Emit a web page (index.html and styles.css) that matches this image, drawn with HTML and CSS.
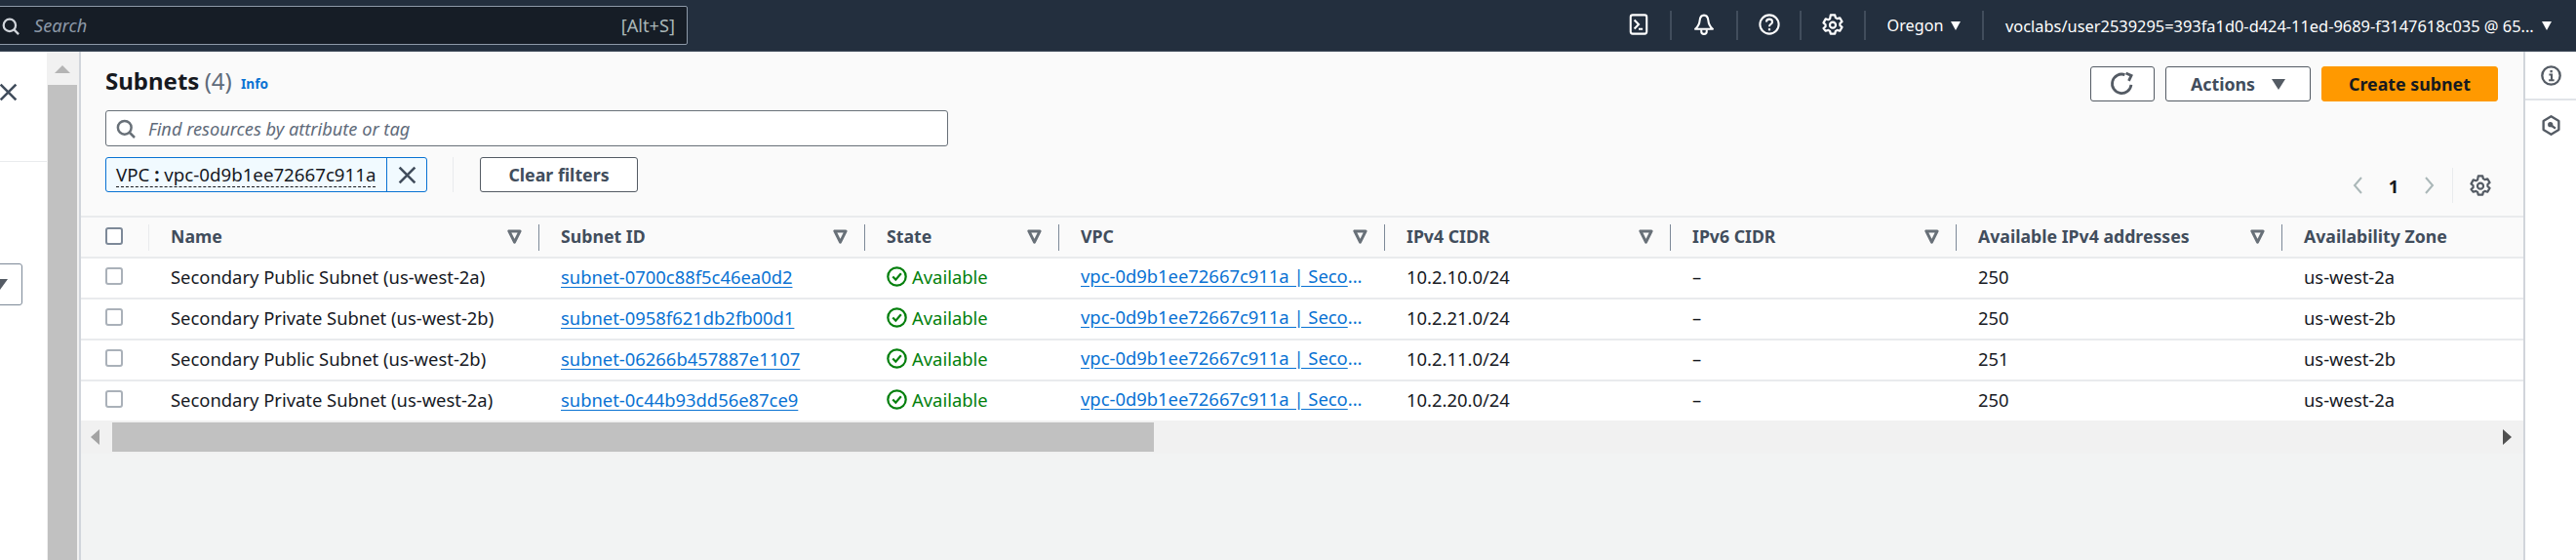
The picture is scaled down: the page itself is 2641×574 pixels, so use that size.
FILE: index.html
```html
<!DOCTYPE html>
<html lang="en">
<head>
<meta charset="utf-8">
<title>Subnets | VPC Console</title>
<link rel="stylesheet" href="styles.css">
</head>
<body>
<svg class="defs" width="0" height="0" aria-hidden="true">
  <defs>
    <symbol id="i-search" viewBox="0 0 16 16"><circle cx="7" cy="7" r="5.5" fill="none" stroke="currentColor" stroke-width="2"/><path d="M11 11l4.2 4.2" fill="none" stroke="currentColor" stroke-width="2"/></symbol>
    <symbol id="i-close" viewBox="0 0 16 16"><path d="M2 2l12 12M14 2L2 14" fill="none" stroke="currentColor" stroke-width="2"/></symbol>
    <symbol id="i-filter" viewBox="0 0 12 12"><path d="M1.5 1.5h9L6 10.5z" fill="none" stroke="currentColor" stroke-width="2.4" stroke-linejoin="round"/></symbol>
    <symbol id="i-check" viewBox="0 0 16 16"><circle cx="8" cy="8" r="7" fill="none" stroke="currentColor" stroke-width="1.7"/><path d="M4.8 8l2.3 2.4 4.2-4.8" fill="none" stroke="currentColor" stroke-width="1.7"/></symbol>
    <symbol id="i-gear" viewBox="0 0 16 16"><path d="M6.4 1h3.2l.5 2 1.2.7 2-.6 1.6 2.8-1.5 1.4v1.4l1.5 1.4-1.6 2.8-2-.6-1.2.7-.5 2H6.4l-.5-2-1.2-.7-2 .6L1.1 11l1.5-1.4V8.2L1.1 6.8l1.6-2.9 2 .6 1.2-.7z" fill="none" stroke="currentColor" stroke-width="1.6" stroke-linejoin="round"/><circle cx="8" cy="8.5" r="2.2" fill="none" stroke="currentColor" stroke-width="1.6"/></symbol>
  </defs>
</svg>

<header class="topnav">
  <div class="global-search">
    <svg class="gs-icon"><use href="#i-search"/></svg>
    <span class="gs-text">Search</span>
    <span class="gs-key">[Alt+S]</span>
  </div>
  <nav class="nav-right">
    <div class="nav-cell">
      <svg class="nav-icon" viewBox="0 0 16 16"><rect x="2" y="1" width="12" height="14" rx="1.5" fill="none" stroke="currentColor" stroke-width="1.5"/><path d="M4.8 4.8L8 8l-3.2 3.2M8 11.5h3" fill="none" stroke="currentColor" stroke-width="1.5"/></svg>
    </div>
    <div class="nav-cell">
      <svg class="nav-icon" viewBox="0 0 16 16"><path d="M8 1.2C5.8 1.2 5 3 4.8 5.2 4.6 8 3.4 9.8 1.5 11.5h13C12.6 9.8 11.4 8 11.2 5.2 11 3 10.2 1.2 8 1.2z" fill="none" stroke="currentColor" stroke-width="1.5" stroke-linejoin="round"/><path d="M6 12v1.2a2 2 0 0 0 4 0V12" fill="none" stroke="currentColor" stroke-width="1.5"/></svg>
    </div>
    <div class="nav-cell">
      <svg class="nav-icon" viewBox="0 0 16 16"><circle cx="8" cy="8" r="7" fill="none" stroke="currentColor" stroke-width="1.5"/><path d="M5.8 6.2C5.8 4.9 6.8 4.1 8 4.1s2.2.8 2.2 2c0 1.7-2.2 1.8-2.2 3.5" fill="none" stroke="currentColor" stroke-width="1.5"/><path d="M7.2 11h1.6v1.6H7.2z" fill="currentColor"/></svg>
    </div>
    <div class="nav-cell">
      <svg class="nav-icon"><use href="#i-gear"/></svg>
    </div>
    <div class="nav-cell nav-region">Oregon <span class="nav-caret"></span></div>
    <div class="nav-cell nav-account"><span>voclabs/user2539295=393fa1d0-d424-11ed-9689-f3147618c035 @ 65...</span><span class="nav-caret"></span></div>
  </nav>
</header>

<div class="shell">
  <aside class="sidepanel">
    <svg class="side-close"><use href="#i-close"/></svg>
    <div class="side-rule"></div>
    <div class="side-select"><span class="side-caret"></span></div>
  </aside>

  <div class="vscroll">
    <span class="vscroll-arrow"></span>
    <div class="vscroll-thumb"></div>
  </div>

  <main class="content">
    <section class="panel-head">
      <h1 class="title">Subnets <span class="count">(4)</span> <a class="info">Info</a></h1>
      <div class="actions">
        <button class="btn btn-icon">
          <svg class="refresh" viewBox="0 0 16 16"><path d="M13.5 8.5A6 6 0 1 1 9.5 2.2" fill="none" stroke="currentColor" stroke-width="1.7"/><path d="M9.6 0.8l3.4 1.5-1.6 3.4" fill="none" stroke="currentColor" stroke-width="1.7" transform="translate(0.6 0.4)"/></svg>
        </button>
        <button class="btn btn-actions">Actions <span class="btn-caret"></span></button>
        <button class="btn btn-primary">Create subnet</button>
      </div>
    </section>

    <section class="filters">
      <div class="filter-left">
        <div class="find">
          <svg class="find-icon"><use href="#i-search"/></svg>
          <span class="find-text">Find resources by attribute or tag</span>
        </div>
        <div class="tokens">
          <div class="token">
            <span class="token-label"><span class="token-text">VPC <b>:</b> vpc-0d9b1ee72667c911a</span></span>
            <span class="token-x"><svg class="token-x-icon"><use href="#i-close"/></svg></span>
          </div>
          <div class="token-sep"></div>
          <button class="btn btn-clear">Clear filters</button>
        </div>
      </div>
      <div class="pager">
        <svg class="chev" viewBox="0 0 12 20"><path d="M10 2L3 10l7 8" fill="none" stroke="currentColor" stroke-width="2"/></svg>
        <span class="page-num">1</span>
        <svg class="chev" viewBox="0 0 12 20"><path d="M2 2l7 8-7 8" fill="none" stroke="currentColor" stroke-width="2"/></svg>
        <span class="pager-sep"><svg class="pager-gear"><use href="#i-gear"/></svg></span>
      </div>
    </section>

    <div class="table-wrap">
      <table class="grid">
        <colgroup>
          <col class="c-check"><col class="c-name"><col class="c-id"><col class="c-state"><col class="c-vpc"><col class="c-v4"><col class="c-v6"><col class="c-avail"><col class="c-az">
        </colgroup>
        <thead>
          <tr>
            <th><span class="th-in th-check"><span class="cb"></span></span></th>
            <th><span class="th-in">Name<svg class="fi"><use href="#i-filter"/></svg></span></th>
            <th><span class="th-in">Subnet ID<svg class="fi"><use href="#i-filter"/></svg></span></th>
            <th><span class="th-in">State<svg class="fi"><use href="#i-filter"/></svg></span></th>
            <th><span class="th-in">VPC<svg class="fi"><use href="#i-filter"/></svg></span></th>
            <th><span class="th-in">IPv4 CIDR<svg class="fi"><use href="#i-filter"/></svg></span></th>
            <th><span class="th-in">IPv6 CIDR<svg class="fi"><use href="#i-filter"/></svg></span></th>
            <th><span class="th-in">Available IPv4 addresses<svg class="fi"><use href="#i-filter"/></svg></span></th>
            <th><span class="th-in th-last">Availability Zone</span></th>
          </tr>
        </thead>
        <tbody>
          <tr>
            <td class="cell-check"><span class="cb"></span></td>
            <td>Secondary Public Subnet (us-west-2a)</td>
            <td><a class="link">subnet-0700c88f5c46ea0d2</a></td>
            <td><span class="status"><svg class="status-icon"><use href="#i-check"/></svg>Available</span></td>
            <td><div class="trunc"><a class="link">vpc-0d9b1ee72667c911a | Seco</a>...</div></td>
            <td>10.2.10.0/24</td><td>–</td><td>250</td><td>us-west-2a</td>
          </tr>
          <tr>
            <td class="cell-check"><span class="cb"></span></td>
            <td>Secondary Private Subnet (us-west-2b)</td>
            <td><a class="link">subnet-0958f621db2fb00d1</a></td>
            <td><span class="status"><svg class="status-icon"><use href="#i-check"/></svg>Available</span></td>
            <td><div class="trunc"><a class="link">vpc-0d9b1ee72667c911a | Seco</a>...</div></td>
            <td>10.2.21.0/24</td><td>–</td><td>250</td><td>us-west-2b</td>
          </tr>
          <tr>
            <td class="cell-check"><span class="cb"></span></td>
            <td>Secondary Public Subnet (us-west-2b)</td>
            <td><a class="link">subnet-06266b457887e1107</a></td>
            <td><span class="status"><svg class="status-icon"><use href="#i-check"/></svg>Available</span></td>
            <td><div class="trunc"><a class="link">vpc-0d9b1ee72667c911a | Seco</a>...</div></td>
            <td>10.2.11.0/24</td><td>–</td><td>251</td><td>us-west-2b</td>
          </tr>
          <tr>
            <td class="cell-check"><span class="cb"></span></td>
            <td>Secondary Private Subnet (us-west-2a)</td>
            <td><a class="link">subnet-0c44b93dd56e87ce9</a></td>
            <td><span class="status"><svg class="status-icon"><use href="#i-check"/></svg>Available</span></td>
            <td><div class="trunc"><a class="link">vpc-0d9b1ee72667c911a | Seco</a>...</div></td>
            <td>10.2.20.0/24</td><td>–</td><td>250</td><td>us-west-2a</td>
          </tr>
        </tbody>
      </table>
    </div>

    <div class="hscroll">
      <span class="hs-left"></span>
      <div class="hs-thumb"></div>
      <span class="hs-right"></span>
    </div>
  </main>

  <aside class="tools">
    <div class="tool tool-first">
      <svg class="tool-icon" viewBox="0 0 16 16"><circle cx="8" cy="8" r="7" fill="none" stroke="currentColor" stroke-width="1.8"/><path d="M6.4 7.2H8.4V11.6M6.2 11.6h4.2" fill="none" stroke="currentColor" stroke-width="1.6"/><path d="M7.2 3.8h1.8v1.8H7.2z" fill="currentColor"/></svg>
    </div>
    <div class="tool">
      <svg class="tool-icon" viewBox="0 0 16 16"><path d="M8 1l6 3.5v7L8 15l-6-3.5v-7z" fill="none" stroke="currentColor" stroke-width="1.8" stroke-linejoin="round"/><circle cx="7.4" cy="7.4" r="2" fill="currentColor"/><path d="M8 8l3.4 2.4" fill="none" stroke="currentColor" stroke-width="1.8"/></svg>
    </div>
  </aside>
</div>
</body>
</html>
```

FILE: styles.css
```css
* { box-sizing: border-box; }
html, body { margin: 0; height: 100%; overflow: hidden; }
body {
  display: flex;
  flex-direction: column;
  font-family: "Noto Sans", "Liberation Sans", sans-serif;
  font-size: 18.4px;
  color: #16191f;
  background: #fff;
}
.defs { position: absolute; }
svg { display: block; }

/* top navigation */
.topnav {
  flex: none;
  height: 53px;
  display: flex;
  align-items: flex-start;
  background: #232f3e;
  border-bottom: 1px solid #414d5c;
}
.global-search {
  width: 707px;
  height: 40px;
  margin: 6px 0 0 -2px;
  padding: 0 12px 0 3px;
  display: flex;
  align-items: center;
  background: #161d26;
  border: 1px solid #8d99a8;
  border-radius: 2px;
  color: #aab7b8;
}
.gs-icon { width: 18px; height: 18px; color: #d1d5db; margin-top: 1px; }
.gs-text { margin-left: 15px; font-style: italic; font-size: 18.2px; color: #8d99a8; }
.gs-key { margin-left: auto; font-size: 18.2px; color: #aab7b8; }
.nav-right {
  margin-left: auto;
  display: grid;
  grid-template-columns: 67px 68px 65px 66px 121px 607px;
  height: 30px;
  margin-top: 11px;
  color: #fff;
}
.nav-cell {
  display: flex;
  align-items: center;
  justify-content: center;
  border-right: 2px solid #414d5c;
}
.nav-cell:last-child { border-right: 0; }
.nav-icon { width: 22px; height: 22px; margin-top: -2px; }
.nav-region { font-size: 16.2px; gap: 8px; color: #fff; }
.nav-account { justify-content: flex-start; padding-left: 22px; font-size: 16.4px; gap: 8px; white-space: nowrap; }
.nav-caret {
  display: inline-block;
  width: 0; height: 0;
  border-left: 5px solid transparent;
  border-right: 5px solid transparent;
  border-top: 9px solid #fff;
}

/* shell */
.shell { flex: 1; display: flex; min-height: 0; }
.sidepanel {
  flex: none;
  width: 48px;
  overflow: hidden;
  display: flex;
  flex-direction: column;
  background: #fff;
}
.side-close { flex: none; width: 21px; height: 21px; margin: 31px 0 0 -2px; color: #414d5c; }
.side-rule { height: 1px; margin-top: 60px; background: #e9ebed; }
.side-select {
  flex: none;
  width: 54px;
  height: 43px;
  margin: 104px 0 0 -31px;
  border: 1px solid #7d8998;
  border-radius: 3px;
  background: #fff;
  display: flex;
  align-items: center;
  justify-content: center;
}
.side-caret {
  width: 0; height: 0;
  margin-left: 8px;
  border-left: 8px solid transparent;
  border-right: 8px solid transparent;
  border-top: 11px solid #545b64;
}
.vscroll {
  flex: none;
  width: 35px;
  display: flex;
  flex-direction: column;
  background: #f1f1f1;
  border-right: 2px solid #d1d5db;
  padding-left: 1px;
}
.vscroll-arrow {
  width: 0; height: 0;
  margin: 14px 0 0 7px;
  border-left: 8px solid transparent;
  border-right: 8px solid transparent;
  border-bottom: 8px solid #b4b4b4;
}
.vscroll-thumb { flex: 1; width: 30px; margin-top: 12px; background: #c1c1c1; }

/* main column */
.content {
  flex: none;
  width: 2504px;
  display: flex;
  flex-direction: column;
  min-width: 0;
  background: #f2f3f3;
  overflow: hidden;
}
.panel-head {
  height: 60px;
  padding: 15px 26px 0 25px;
  display: flex;
  justify-content: space-between;
  align-items: flex-start;
  background: #fafafa;
}
.title { margin: -1px 0 0; font-size: 24px; line-height: 32px; font-weight: 700; color: #16191f; }
.count { font-weight: 400; color: #5f6b7a; margin-left: -1px; }
.info { margin-left: 3px; font-size: 13.6px; font-weight: 700; color: #0972d3; vertical-align: 1px; }
.actions { display: flex; gap: 11px; }
.btn {
  height: 36px;
  padding: 0;
  display: flex;
  align-items: center;
  justify-content: center;
  font-family: inherit;
  font-size: 17.8px;
  font-weight: 700;
  color: #414d5c;
  background: #fff;
  border: 1px solid #545b64;
  border-radius: 3px;
}
.btn-icon { width: 66px; }
.refresh { width: 26px; height: 26px; color: #545b64; }
.btn-actions { width: 149px; gap: 17px; }
.btn-caret {
  width: 0; height: 0;
  border-left: 7px solid transparent;
  border-right: 7px solid transparent;
  border-top: 11px solid #545b64;
}
.btn-primary { width: 181px; background: #ff9900; border-color: #ff9900; color: #16191f; }
.btn-clear { width: 162px; }

.filters {
  height: 108px;
  padding: 0 33px 0 25px;
  display: flex;
  justify-content: space-between;
  align-items: flex-start;
  background: #fafafa;
}
.filter-left { width: 864px; display: flex; flex-direction: column; gap: 11px; }
.find {
  height: 37px;
  display: flex;
  align-items: center;
  padding-left: 10px;
  background: #fff;
  border: 1px solid #687078;
  border-radius: 3px;
}
.find-icon { width: 20px; height: 20px; color: #687078; }
.find-text { margin-left: 13px; font-style: italic; font-size: 18.2px; color: #5f6b7a; }
.tokens { display: flex; align-items: stretch; height: 36px; }
.token {
  width: 330px;
  display: flex;
  background: #f1faff;
  border: 1px solid #0972d3;
  border-radius: 3px;
}
.token-label { width: 288px; padding: 0 0 0 10px; display: flex; align-items: center; border-right: 1px solid #0972d3; white-space: nowrap; font-size: 18.7px; }
.token-text { border-bottom: 1px dashed #16191f; line-height: 24px; }
.token-text b { font-weight: 700; }
.token-x { flex: 1; display: flex; align-items: center; justify-content: center; }
.token-x-icon { width: 21px; height: 21px; color: #414d5c; }
.token-sep { width: 1px; margin: 0 27px 0 26px; background: #e9ebed; }

.pager { margin-top: 59px; height: 36px; display: flex; align-items: center; color: #aab7b8; }
.chev { width: 12px; height: 20px; }
.page-num { width: 62px; text-align: center; font-weight: 700; color: #16191f; }
.pager-sep { margin-left: 17px; padding-left: 17px; height: 36px; display: flex; align-items: center; border-left: 1px solid #e9ebed; }
.pager-gear { width: 22px; height: 22px; color: #545b64; }

/* table */
.table-wrap { overflow: hidden; }
.grid { width: 2504px; table-layout: fixed; border-collapse: collapse; }
.c-check { width: 70px; }
.c-name { width: 400px; }
.c-id { width: 334px; }
.c-state { width: 199px; }
.c-vpc { width: 334px; }
.c-v4 { width: 293px; }
.c-v6 { width: 293px; }
.c-avail { width: 334px; }
.c-az { width: 247px; }
th {
  height: 42px;
  padding: 0;
  background: #fafafa;
  border-top: 2px solid #e9ebed;
  border-bottom: 2px solid #e9ebed;
  text-align: left;
  font-size: 17.7px;
  font-weight: 700;
  color: #414d5c;
}
.th-in {
  height: 27px;
  display: flex;
  align-items: center;
  justify-content: space-between;
  padding: 0 17px 2px 22px;
  border-right: 1px solid #7d8998;
}
.th-check { padding: 0 0 2px 25px; border-right-color: #e9ebed; }
.th-last { border-right: 0; }
.fi { width: 15px; height: 15px; color: #687078; }
td {
  height: 42px;
  padding: 0 0 4px 22px;
  background: #fff;
  border-bottom: 2px solid #e9ebed;
  white-space: nowrap;
  color: #16191f;
}
tbody tr:last-child td { border-bottom: 0; height: 41px; }
.cell-check { padding: 0 0 4px 25px; }
.cb {
  display: block;
  width: 18px;
  height: 18px;
  background: #fff;
  border: 2px solid #7d8998;
  border-radius: 3px;
}
td .cb { border-color: #aab1b9; }
.link { color: #0972d3; text-decoration: underline; text-underline-offset: 3px; }
.trunc { color: #0972d3; line-height: 28px; }
.status { display: flex; align-items: center; gap: 5px; color: #037f0c; }
.status-icon { width: 21px; height: 21px; }

/* horizontal scrollbar */
.hscroll {
  height: 34px;
  display: flex;
  align-items: center;
  background: #f1f1f1;
  padding-left: 10px;
}
.hs-left {
  width: 0; height: 0;
  border-top: 8px solid transparent;
  border-bottom: 8px solid transparent;
  border-right: 9px solid #a3a3a3;
}
.hs-thumb { width: 1068px; height: 30px; margin-left: 13px; background: #c1c1c1; }
.hs-right {
  width: 0; height: 0;
  margin-left: auto;
  margin-right: 12px;
  border-top: 8px solid transparent;
  border-bottom: 8px solid transparent;
  border-left: 9px solid #505050;
}

/* right tools */
.tools {
  flex: 1;
  background: #fff;
  border-left: 2px solid #d1d5db;
  color: #545b64;
}
.tool { height: 50px; display: flex; align-items: center; justify-content: center; }
.tool-first { height: 50px; border-bottom: 2px solid #e1e4e8; padding-top: 1px; }
.tool-icon { width: 21px; height: 21px; }
```
